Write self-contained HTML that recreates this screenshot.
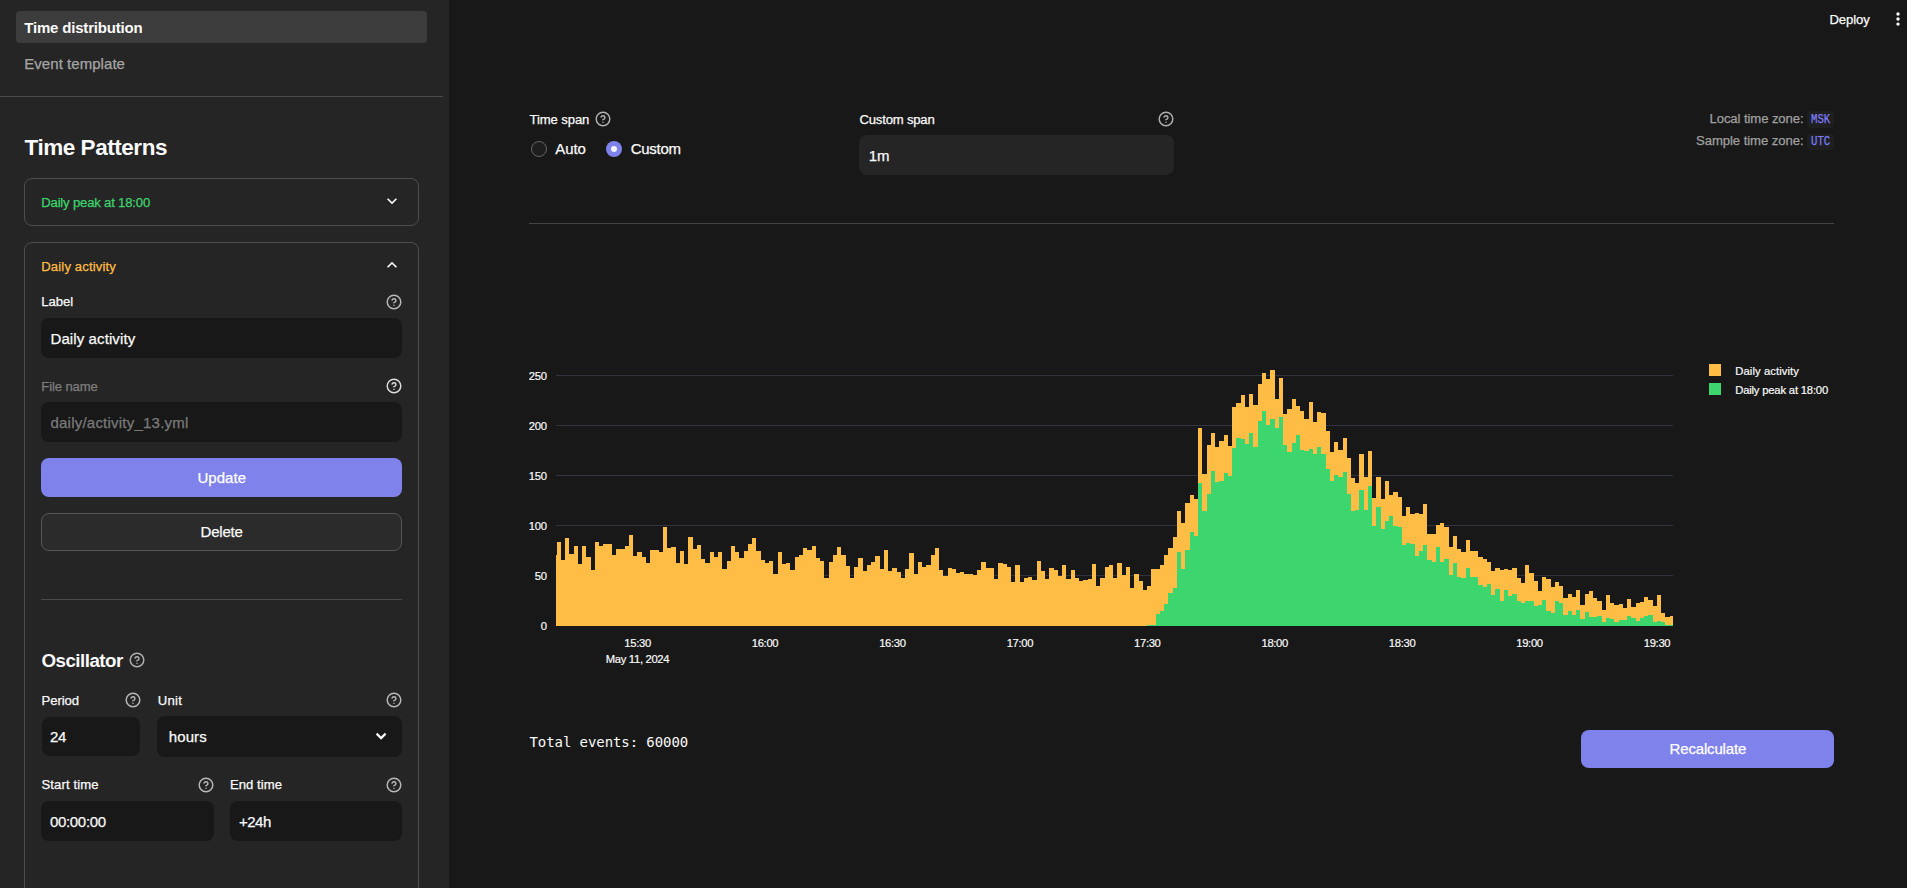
<!DOCTYPE html>
<html lang="en">
<head>
<meta charset="utf-8">
<title>Time distribution</title>
<style>
*{box-sizing:border-box;margin:0;padding:0}
html,body{width:1907px;height:888px;overflow:hidden;background:#181818;font-family:'Liberation Sans', sans-serif;color:#fafafa}
.abs,.tx,.ic,.chart{position:absolute}
.tx{white-space:nowrap;line-height:1;font-weight:400;-webkit-text-stroke:0.25px currentColor}
#sidebar{position:absolute;left:0;top:0;width:449px;height:888px;background:#252525;overflow:hidden}
#main{position:absolute;left:0;top:0;width:1907px;height:888px;pointer-events:none}
.nav-active{left:16px;top:11px;width:411px;height:32px;border-radius:4px;background:#3c3c3c}
.hr{height:1px;background:#4a4a4a}
.exp{border:1px solid #4e4e4e;border-radius:8px}
.inp{background:#181818;border-radius:8px}
.inp2{background:#252525;border-radius:8px}
.btn-p{background:#8082ec;border-radius:8px}
.btn-s{background:#2b2b2b;border:1px solid #565656;border-radius:8px}
.radio{width:16px;height:16px;border-radius:50%}
.radio.off{border:1px solid #656565;background:#1e1e1e}
.radio.on{background:#8082ec}
.radio.on::after{content:"";position:absolute;left:5px;top:5px;width:6px;height:6px;border-radius:50%;background:#f5f5ff}
  .chip{background:#1f1f1f;border-radius:4px}
.chart{left:529px;top:290px}
</style>
</head>
<body>
<div id="sidebar">
  <nav>
    <div class="abs nav-active"></div>
    <span class="tx" style="left:24.25px;top:20.00px;font-size:15.0px;color:#fafafa;letter-spacing:-0.185px;font-weight:700;-webkit-text-stroke:0;">Time distribution</span>
    <span class="tx" style="left:24.25px;top:56.00px;font-size:15.0px;color:#a5a5a5;letter-spacing:0.050px;">Event template</span>
  </nav>
  <div class="abs hr" style="left:0;top:96px;width:443px"></div>
  <h2 class="tx" style="left:24.50px;top:137.00px;font-size:22.5px;color:#fafafa;letter-spacing:-0.453px;font-weight:700;-webkit-text-stroke:0;">Time Patterns</h2>

  <section class="abs exp" style="left:24px;top:178px;width:395px;height:48px"></section>
  <span class="tx" style="left:41.25px;top:196.00px;font-size:13.125px;color:#3dd56d;letter-spacing:-0.183px;">Daily peak at 18:00</span>
  <svg class="ic" style="left:382px;top:191px" width="20" height="20" viewBox="0 0 24 24" fill="#fafafa"><path d="M16.59 8.59L12 13.17 7.41 8.59 6 10l6 6 6-6z"/></svg>

  <section class="abs exp" style="left:24px;top:242px;width:395px;height:700px"></section>
  <span class="tx" style="left:41.25px;top:260.00px;font-size:13.125px;color:#ffbd45;letter-spacing:0.136px;">Daily activity</span>
  <svg class="ic" style="left:382px;top:255.3px" width="20" height="20" viewBox="0 0 24 24" fill="#fafafa"><path d="M12 8l-6 6 1.41 1.41L12 10.83l4.59 4.59L18 14z"/></svg>

  <label class="tx" style="left:41.25px;top:295.00px;font-size:13.125px;color:#fafafa;letter-spacing:-0.065px;">Label</label>
  <svg class="ic" style="left:386.00px;top:294.00px" width="16" height="16" viewBox="0 0 24 24" fill="none" stroke="#b8b8b8" stroke-width="2.2" stroke-linecap="round" stroke-linejoin="round"><circle cx="12" cy="12" r="10.2"/><path d="M9.09 9a3 3 0 0 1 5.83 1c0 2-3 3-3 3"/><line x1="12" y1="17" x2="12.01" y2="17"/></svg>
  <div class="abs inp" style="left:41px;top:318px;width:361px;height:40px"></div>
  <span class="tx" style="left:50.50px;top:331.00px;font-size:15.0px;color:#fafafa;letter-spacing:0.100px;">Daily activity</span>

  <label class="tx" style="left:41.25px;top:380.00px;font-size:13.125px;color:#7e7e7e;letter-spacing:-0.118px;">File name</label>
  <svg class="ic" style="left:386.00px;top:378.25px" width="16" height="16" viewBox="0 0 24 24" fill="none" stroke="#dcdcdc" stroke-width="2.2" stroke-linecap="round" stroke-linejoin="round"><circle cx="12" cy="12" r="10.2"/><path d="M9.09 9a3 3 0 0 1 5.83 1c0 2-3 3-3 3"/><line x1="12" y1="17" x2="12.01" y2="17"/></svg>
  <div class="abs inp" style="left:41px;top:402px;width:361px;height:40px"></div>
  <span class="tx" style="left:50.50px;top:415.00px;font-size:15.0px;color:#7a7a7a;letter-spacing:0.220px;">daily/activity_13.yml</span>

  <div class="abs btn-p" style="left:41px;top:458px;width:361px;height:39px"></div>
  <span class="tx" style="left:197.50px;top:470.00px;font-size:15.0px;color:#ffffff;letter-spacing:0.022px;">Update</span>
  <div class="abs btn-s" style="left:41px;top:513px;width:361px;height:38px"></div>
  <span class="tx" style="left:200.50px;top:524.00px;font-size:15.0px;color:#fafafa;letter-spacing:-0.185px;">Delete</span>

  <div class="abs hr" style="left:41px;top:599px;width:361px"></div>

  <h3 class="tx" style="left:41.50px;top:652.00px;font-size:18.75px;color:#fafafa;letter-spacing:-0.524px;font-weight:700;-webkit-text-stroke:0;">Oscillator</h3>
  <svg class="ic" style="left:129.00px;top:652.25px" width="16" height="16" viewBox="0 0 24 24" fill="none" stroke="#b0b0b0" stroke-width="2.2" stroke-linecap="round" stroke-linejoin="round"><circle cx="12" cy="12" r="10.2"/><path d="M9.09 9a3 3 0 0 1 5.83 1c0 2-3 3-3 3"/><line x1="12" y1="17" x2="12.01" y2="17"/></svg>

  <label class="tx" style="left:41.50px;top:694.00px;font-size:13.125px;color:#fafafa;letter-spacing:-0.066px;">Period</label>
  <svg class="ic" style="left:125.00px;top:692.25px" width="16" height="16" viewBox="0 0 24 24" fill="none" stroke="#b8b8b8" stroke-width="2.2" stroke-linecap="round" stroke-linejoin="round"><circle cx="12" cy="12" r="10.2"/><path d="M9.09 9a3 3 0 0 1 5.83 1c0 2-3 3-3 3"/><line x1="12" y1="17" x2="12.01" y2="17"/></svg>
  <label class="tx" style="left:157.75px;top:694.00px;font-size:13.125px;color:#fafafa;letter-spacing:0.297px;">Unit</label>
  <svg class="ic" style="left:386.00px;top:692.25px" width="16" height="16" viewBox="0 0 24 24" fill="none" stroke="#b8b8b8" stroke-width="2.2" stroke-linecap="round" stroke-linejoin="round"><circle cx="12" cy="12" r="10.2"/><path d="M9.09 9a3 3 0 0 1 5.83 1c0 2-3 3-3 3"/><line x1="12" y1="17" x2="12.01" y2="17"/></svg>
  <div class="abs inp" style="left:41.5px;top:717px;width:98.5px;height:39px"></div>
  <span class="tx" style="left:50.00px;top:729.00px;font-size:15.0px;color:#fafafa;letter-spacing:-0.342px;">24</span>
  <div class="abs inp" style="left:157px;top:716px;width:245px;height:41px"></div>
  <span class="tx" style="left:168.75px;top:729.00px;font-size:15.0px;color:#fafafa;letter-spacing:0.096px;">hours</span>
  <svg class="ic" style="left:374px;top:730px" width="14" height="12" viewBox="0 0 14 12" fill="none" stroke="#fafafa" stroke-width="2.2"><path d="M2.6 3.6L7.1 8.1L11.6 3.6"/></svg>

  <label class="tx" style="left:41.50px;top:778.00px;font-size:13.125px;color:#fafafa;letter-spacing:0.116px;">Start time</label>
  <svg class="ic" style="left:198.00px;top:777.00px" width="16" height="16" viewBox="0 0 24 24" fill="none" stroke="#b8b8b8" stroke-width="2.2" stroke-linecap="round" stroke-linejoin="round"><circle cx="12" cy="12" r="10.2"/><path d="M9.09 9a3 3 0 0 1 5.83 1c0 2-3 3-3 3"/><line x1="12" y1="17" x2="12.01" y2="17"/></svg>
  <label class="tx" style="left:230.00px;top:778.00px;font-size:13.125px;color:#fafafa;letter-spacing:0.033px;">End time</label>
  <svg class="ic" style="left:386.00px;top:777.00px" width="16" height="16" viewBox="0 0 24 24" fill="none" stroke="#b8b8b8" stroke-width="2.2" stroke-linecap="round" stroke-linejoin="round"><circle cx="12" cy="12" r="10.2"/><path d="M9.09 9a3 3 0 0 1 5.83 1c0 2-3 3-3 3"/><line x1="12" y1="17" x2="12.01" y2="17"/></svg>
  <div class="abs inp" style="left:41px;top:801px;width:173px;height:40px"></div>
  <span class="tx" style="left:50.00px;top:814.00px;font-size:15.0px;color:#fafafa;letter-spacing:-0.330px;">00:00:00</span>
  <div class="abs inp" style="left:230px;top:801px;width:172px;height:40px"></div>
  <span class="tx" style="left:239.00px;top:814.00px;font-size:15.0px;color:#fafafa;letter-spacing:-0.509px;">+24h</span>
</div>

<div id="main">
  <span class="tx" style="left:1829.50px;top:13.00px;font-size:13.125px;color:#fafafa;letter-spacing:-0.093px;">Deploy</span>
  <svg class="ic" style="left:1894px;top:10px" width="8" height="20" viewBox="0 0 8 20" fill="#fafafa"><circle cx="4" cy="4" r="1.7"/><circle cx="4" cy="9.05" r="1.7"/><circle cx="4" cy="14.1" r="1.7"/></svg>

  <label class="tx" style="left:529.50px;top:113.00px;font-size:13.125px;color:#fafafa;letter-spacing:-0.107px;">Time span</label>
  <svg class="ic" style="left:595.00px;top:111.25px" width="16" height="16" viewBox="0 0 24 24" fill="none" stroke="#b0b0b0" stroke-width="2.2" stroke-linecap="round" stroke-linejoin="round"><circle cx="12" cy="12" r="10.2"/><path d="M9.09 9a3 3 0 0 1 5.83 1c0 2-3 3-3 3"/><line x1="12" y1="17" x2="12.01" y2="17"/></svg>
  <div class="abs radio off" style="left:531px;top:141px"></div>
  <span class="tx" style="left:555.25px;top:141.00px;font-size:15.0px;color:#fafafa;letter-spacing:-0.089px;">Auto</span>
  <div class="abs radio on" style="left:606px;top:141px"></div>
  <span class="tx" style="left:630.75px;top:141.00px;font-size:15.0px;color:#fafafa;letter-spacing:-0.280px;">Custom</span>

  <label class="tx" style="left:859.50px;top:113.00px;font-size:13.125px;color:#fafafa;letter-spacing:-0.203px;">Custom span</label>
  <svg class="ic" style="left:1157.50px;top:111.25px" width="16" height="16" viewBox="0 0 24 24" fill="none" stroke="#b0b0b0" stroke-width="2.2" stroke-linecap="round" stroke-linejoin="round"><circle cx="12" cy="12" r="10.2"/><path d="M9.09 9a3 3 0 0 1 5.83 1c0 2-3 3-3 3"/><line x1="12" y1="17" x2="12.01" y2="17"/></svg>
  <div class="abs inp2" style="left:859px;top:135px;width:315px;height:40px"></div>
  <span class="tx" style="left:868.75px;top:148.00px;font-size:15.0px;color:#fafafa;letter-spacing:-0.169px;">1m</span>

  <span class="tx" style="left:1709.50px;top:112.00px;font-size:13.125px;color:#a0a0a0;letter-spacing:-0.091px;">Local time zone:</span>
  <div class="abs chip" style="left:1807px;top:111px;width:27px;height:16.5px"></div>
  <code class="tx" style="left:1810.80px;top:114.00px;font-size:12.5px;color:#7d7df8;transform:scaleX(0.8532);transform-origin:0 0;font-family:'Liberation Mono', monospace;">MSK</code>
  <span class="tx" style="left:1696.00px;top:134.00px;font-size:13.125px;color:#a0a0a0;letter-spacing:-0.063px;">Sample time zone:</span>
  <div class="abs chip" style="left:1807px;top:133.5px;width:27px;height:16.5px"></div>
  <code class="tx" style="left:1810.80px;top:136.00px;font-size:12.5px;color:#7d7df8;transform:scaleX(0.8532);transform-origin:0 0;font-family:'Liberation Mono', monospace;">UTC</code>

  <div class="abs hr" style="left:529px;top:223px;width:1305px;background:#444444"></div>

<svg class="chart" width="1305" height="450" viewBox="529 290 1305 450" shape-rendering="crispEdges">
<line x1="556" x2="1673" y1="625.5" y2="625.5" stroke="#31333f" stroke-width="1"/>
<line x1="556" x2="1673" y1="575.5" y2="575.5" stroke="#31333f" stroke-width="1"/>
<line x1="556" x2="1673" y1="525.5" y2="525.5" stroke="#31333f" stroke-width="1"/>
<line x1="556" x2="1673" y1="475.5" y2="475.5" stroke="#31333f" stroke-width="1"/>
<line x1="556" x2="1673" y1="425.5" y2="425.5" stroke="#31333f" stroke-width="1"/>
<line x1="556" x2="1673" y1="375.5" y2="375.5" stroke="#31333f" stroke-width="1"/>
<path d="M556 626V555H557V626ZM557 626V542H561V626ZM561 626V560H565V626ZM565 626V538H569V626ZM569 626V554H574V626ZM574 626V546H578V626ZM578 626V564H582V626ZM582 626V546H586V626ZM586 626V557H591V626ZM591 626V570H595V626ZM595 626V542H599V626ZM599 626V546H603V626ZM603 626V544H608V626ZM608 626V544H612V626ZM612 626V555H616V626ZM616 626V549H620V626ZM620 626V549H625V626ZM625 626V546H629V626ZM629 626V535H633V626ZM633 626V556H637V626ZM637 626V552H642V626ZM642 626V557H646V626ZM646 626V563H650V626ZM650 626V550H654V626ZM654 626V550H659V626ZM659 626V552H663V626ZM663 626V527H667V626ZM667 626V548H671V626ZM671 626V547H676V626ZM676 626V563H680V626ZM680 626V551H684V626ZM684 626V564H688V626ZM688 626V537H693V626ZM693 626V549H697V626ZM697 626V545H701V626ZM701 626V559H705V626ZM705 626V563H710V626ZM710 626V552H714V626ZM714 626V557H718V626ZM718 626V552H722V626ZM722 626V569H727V626ZM727 626V561H731V626ZM731 626V546H735V626ZM735 626V552H739V626ZM739 626V558H744V626ZM744 626V551H748V626ZM748 626V544H752V626ZM752 626V538H756V626ZM756 626V551H761V626ZM761 626V560H765V626ZM765 626V563H769V626ZM769 626V561H773V626ZM773 626V574H778V626ZM778 626V552H782V626ZM782 626V564H786V626ZM786 626V563H790V626ZM790 626V570H795V626ZM795 626V557H799V626ZM799 626V555H803V626ZM803 626V548H807V626ZM807 626V550H812V626ZM812 626V546H816V626ZM816 626V558H820V626ZM820 626V561H824V626ZM824 626V578H829V626ZM829 626V562H833V626ZM833 626V555H837V626ZM837 626V547H841V626ZM841 626V555H846V626ZM846 626V566H850V626ZM850 626V578H854V626ZM854 626V567H858V626ZM858 626V558H863V626ZM863 626V571H867V626ZM867 626V565H871V626ZM871 626V562H875V626ZM875 626V556H880V626ZM880 626V569H884V626ZM884 626V550H888V626ZM888 626V571H892V626ZM892 626V568H897V626ZM897 626V572H901V626ZM901 626V578H905V626ZM905 626V569H909V626ZM909 626V553H914V626ZM914 626V574H918V626ZM918 626V562H922V626ZM922 626V567H926V626ZM926 626V565H931V626ZM931 626V555H935V626ZM935 626V548H939V626ZM939 626V570H943V626ZM943 626V576H948V626ZM948 626V568H952V626ZM952 626V569H956V626ZM956 626V573H960V626ZM960 626V572H964V626ZM964 626V574H969V626ZM969 626V574H973V626ZM973 626V575H977V626ZM977 626V570H981V626ZM981 626V562H986V626ZM986 626V568H990V626ZM990 626V568H994V626ZM994 626V579H998V626ZM998 626V563H1003V626ZM1003 626V564H1007V626ZM1007 626V567H1011V626ZM1011 626V582H1015V626ZM1015 626V565H1020V626ZM1020 626V582H1024V626ZM1024 626V578H1028V626ZM1028 626V577H1032V626ZM1032 626V580H1037V626ZM1037 626V561H1041V626ZM1041 626V571H1045V626ZM1045 626V579H1049V626ZM1049 626V568H1054V626ZM1054 626V570H1058V626ZM1058 626V576H1062V626ZM1062 626V565H1066V626ZM1066 626V579H1071V626ZM1071 626V570H1075V626ZM1075 626V578H1079V626ZM1079 626V581H1083V626ZM1083 626V580H1088V626ZM1088 626V579H1092V626ZM1092 626V564H1096V626ZM1096 626V586H1100V626ZM1100 626V578H1105V626ZM1105 626V567H1109V626ZM1109 626V565H1113V626ZM1113 626V578H1117V626ZM1117 626V563H1122V626ZM1122 626V575H1126V626ZM1126 626V567H1130V626ZM1130 626V588H1134V626ZM1134 626V574H1139V626ZM1139 626V581H1143V626ZM1143 626V590H1147V626ZM1147 626V586H1151V626ZM1151 626V569H1156V626ZM1156 626V569H1160V626ZM1160 626V565H1164V626ZM1164 626V555H1168V626ZM1168 626V548H1173V626ZM1173 626V537H1177V626ZM1177 626V511H1181V626ZM1181 626V523H1185V626ZM1185 626V503H1190V626ZM1190 626V495H1194V626ZM1194 626V499H1198V626ZM1198 626V428H1202V626ZM1202 626V474H1207V626ZM1207 626V445H1211V626ZM1211 626V433H1215V626ZM1215 626V447H1219V626ZM1219 626V441H1224V626ZM1224 626V435H1228V626ZM1228 626V446H1232V626ZM1232 626V407H1236V626ZM1236 626V403H1241V626ZM1241 626V395H1245V626ZM1245 626V407H1249V626ZM1249 626V394H1253V626ZM1253 626V405H1258V626ZM1258 626V384H1262V626ZM1262 626V373H1266V626ZM1266 626V379H1270V626ZM1270 626V370H1275V626ZM1275 626V399H1279V626ZM1279 626V378H1283V626ZM1283 626V414H1287V626ZM1287 626V409H1292V626ZM1292 626V399H1296V626ZM1296 626V406H1300V626ZM1300 626V411H1304V626ZM1304 626V419H1309V626ZM1309 626V402H1313V626ZM1313 626V422H1317V626ZM1317 626V412H1321V626ZM1321 626V413H1326V626ZM1326 626V431H1330V626ZM1330 626V452H1334V626ZM1334 626V442H1338V626ZM1338 626V450H1343V626ZM1343 626V438H1347V626ZM1347 626V458H1351V626ZM1351 626V478H1355V626ZM1355 626V483H1359V626ZM1359 626V454H1364V626ZM1364 626V477H1368V626ZM1368 626V451H1372V626ZM1372 626V498H1376V626ZM1376 626V477H1381V626ZM1381 626V499H1385V626ZM1385 626V481H1389V626ZM1389 626V495H1393V626ZM1393 626V492H1398V626ZM1398 626V497H1402V626ZM1402 626V516H1406V626ZM1406 626V507H1410V626ZM1410 626V514H1415V626ZM1415 626V513H1419V626ZM1419 626V514H1423V626ZM1423 626V504H1427V626ZM1427 626V534H1432V626ZM1432 626V534H1436V626ZM1436 626V525H1440V626ZM1440 626V523H1444V626ZM1444 626V527H1449V626ZM1449 626V547H1453V626ZM1453 626V536H1457V626ZM1457 626V549H1461V626ZM1461 626V552H1466V626ZM1466 626V540H1470V626ZM1470 626V551H1474V626ZM1474 626V551H1478V626ZM1478 626V557H1483V626ZM1483 626V559H1487V626ZM1487 626V562H1491V626ZM1491 626V571H1495V626ZM1495 626V568H1500V626ZM1500 626V570H1504V626ZM1504 626V569H1508V626ZM1508 626V570H1512V626ZM1512 626V568H1517V626ZM1517 626V578H1521V626ZM1521 626V583H1525V626ZM1525 626V565H1529V626ZM1529 626V573H1534V626ZM1534 626V581H1538V626ZM1538 626V591H1542V626ZM1542 626V577H1546V626ZM1546 626V579H1551V626ZM1551 626V587H1555V626ZM1555 626V582H1559V626ZM1559 626V586H1563V626ZM1563 626V598H1568V626ZM1568 626V594H1572V626ZM1572 626V597H1576V626ZM1576 626V590H1580V626ZM1580 626V605H1585V626ZM1585 626V594H1589V626ZM1589 626V591H1593V626ZM1593 626V598H1597V626ZM1597 626V601H1602V626ZM1602 626V610H1606V626ZM1606 626V595H1610V626ZM1610 626V603H1614V626ZM1614 626V605H1619V626ZM1619 626V604H1623V626ZM1623 626V608H1627V626ZM1627 626V599H1631V626ZM1631 626V607H1636V626ZM1636 626V603H1640V626ZM1640 626V602H1644V626ZM1644 626V597H1648V626ZM1648 626V600H1653V626ZM1653 626V606H1657V626ZM1657 626V595H1661V626ZM1661 626V613H1665V626ZM1665 626V617H1670V626ZM1670 626V616H1673V626Z" fill="#ffbd45"/>
<path d="M1147 626V625H1151V626ZM1151 626V625H1156V626ZM1156 626V614H1160V626ZM1160 626V611H1164V626ZM1164 626V604H1168V626ZM1168 626V593H1173V626ZM1173 626V588H1177V626ZM1177 626V552H1181V626ZM1181 626V569H1185V626ZM1185 626V550H1190V626ZM1190 626V532H1194V626ZM1194 626V536H1198V626ZM1198 626V483H1202V626ZM1202 626V511H1207V626ZM1207 626V494H1211V626ZM1211 626V471H1215V626ZM1215 626V482H1219V626ZM1219 626V481H1224V626ZM1224 626V473H1228V626ZM1228 626V476H1232V626ZM1232 626V448H1236V626ZM1236 626V438H1241V626ZM1241 626V439H1245V626ZM1245 626V444H1249V626ZM1249 626V433H1253V626ZM1253 626V447H1258V626ZM1258 626V421H1262V626ZM1262 626V411H1266V626ZM1266 626V425H1270V626ZM1270 626V419H1275V626ZM1275 626V428H1279V626ZM1279 626V417H1283V626ZM1283 626V445H1287V626ZM1287 626V452H1292V626ZM1292 626V443H1296V626ZM1296 626V435H1300V626ZM1300 626V450H1304V626ZM1304 626V451H1309V626ZM1309 626V449H1313V626ZM1313 626V454H1317V626ZM1317 626V447H1321V626ZM1321 626V454H1326V626ZM1326 626V469H1330V626ZM1330 626V481H1334V626ZM1334 626V475H1338V626ZM1338 626V477H1343V626ZM1343 626V472H1347V626ZM1347 626V494H1351V626ZM1351 626V511H1355V626ZM1355 626V510H1359V626ZM1359 626V490H1364V626ZM1364 626V510H1368V626ZM1368 626V486H1372V626ZM1372 626V526H1376V626ZM1376 626V507H1381V626ZM1381 626V529H1385V626ZM1385 626V521H1389V626ZM1389 626V516H1393V626ZM1393 626V526H1398V626ZM1398 626V527H1402V626ZM1402 626V545H1406V626ZM1406 626V543H1410V626ZM1410 626V544H1415V626ZM1415 626V556H1419V626ZM1419 626V551H1423V626ZM1423 626V545H1427V626ZM1427 626V560H1432V626ZM1432 626V562H1436V626ZM1436 626V547H1440V626ZM1440 626V562H1444V626ZM1444 626V559H1449V626ZM1449 626V575H1453V626ZM1453 626V563H1457V626ZM1457 626V577H1461V626ZM1461 626V578H1466V626ZM1466 626V568H1470V626ZM1470 626V577H1474V626ZM1474 626V577H1478V626ZM1478 626V585H1483V626ZM1483 626V587H1487V626ZM1487 626V584H1491V626ZM1491 626V595H1495V626ZM1495 626V589H1500V626ZM1500 626V601H1504V626ZM1504 626V590H1508V626ZM1508 626V596H1512V626ZM1512 626V594H1517V626ZM1517 626V601H1521V626ZM1521 626V603H1525V626ZM1525 626V601H1529V626ZM1529 626V601H1534V626ZM1534 626V606H1538V626ZM1538 626V605H1542V626ZM1542 626V600H1546V626ZM1546 626V611H1551V626ZM1551 626V613H1555V626ZM1555 626V601H1559V626ZM1559 626V603H1563V626ZM1563 626V615H1568V626ZM1568 626V611H1572V626ZM1572 626V615H1576V626ZM1576 626V610H1580V626ZM1580 626V619H1585V626ZM1585 626V612H1589V626ZM1589 626V617H1593V626ZM1593 626V617H1597V626ZM1597 626V616H1602V626ZM1602 626V622H1606V626ZM1606 626V618H1610V626ZM1610 626V619H1614V626ZM1614 626V622H1619V626ZM1619 626V620H1623V626ZM1623 626V620H1627V626ZM1627 626V616H1631V626ZM1631 626V618H1636V626ZM1636 626V621H1640V626ZM1640 626V618H1644V626ZM1644 626V616H1648V626ZM1648 626V615H1653V626ZM1653 626V622H1657V626ZM1657 626V621H1661V626ZM1661 626V622H1665V626ZM1665 626V625H1670V626ZM1670 626V625H1673V626Z" fill="#3dd56d"/>
<g shape-rendering="auto" font-family="'Liberation Sans', sans-serif" font-size="11.25" fill="#fafafa" stroke="#fafafa" stroke-width="0.2">
<text x="546.75" y="630.0" text-anchor="end" letter-spacing="-0.25">0</text>
<text x="546.75" y="580.0" text-anchor="end" letter-spacing="-0.25">50</text>
<text x="546.75" y="530.0" text-anchor="end" letter-spacing="-0.25">100</text>
<text x="546.75" y="480.0" text-anchor="end" letter-spacing="-0.25">150</text>
<text x="546.75" y="430.0" text-anchor="end" letter-spacing="-0.25">200</text>
<text x="546.75" y="380.0" text-anchor="end" letter-spacing="-0.25">250</text>
<text x="637.6" y="647" text-anchor="middle" letter-spacing="-0.34">15:30</text>
<text x="765.0" y="647" text-anchor="middle" letter-spacing="-0.34">16:00</text>
<text x="892.4" y="647" text-anchor="middle" letter-spacing="-0.34">16:30</text>
<text x="1019.9" y="647" text-anchor="middle" letter-spacing="-0.34">17:00</text>
<text x="1147.3" y="647" text-anchor="middle" letter-spacing="-0.34">17:30</text>
<text x="1274.7" y="647" text-anchor="middle" letter-spacing="-0.34">18:00</text>
<text x="1402.1" y="647" text-anchor="middle" letter-spacing="-0.34">18:30</text>
<text x="1529.5" y="647" text-anchor="middle" letter-spacing="-0.34">19:00</text>
<text x="1657.0" y="647" text-anchor="middle" letter-spacing="-0.34">19:30</text>
<text x="637.5" y="663" text-anchor="middle" letter-spacing="-0.32">May 11, 2024</text>
<text x="1735.25" y="375" letter-spacing="0.09">Daily activity</text>
<text x="1735.25" y="394" letter-spacing="-0.19">Daily peak at 18:00</text>
</g>
<rect x="1709" y="364" width="12" height="12" fill="#ffbd45"/>
<rect x="1709" y="383" width="12" height="12" fill="#3dd56d"/>
</svg>

  <pre class="tx" style="left:529.50px;top:735.00px;font-size:14px;color:#fafafa;letter-spacing:-0.081px;font-family:'DejaVu Sans Mono', 'Liberation Mono', monospace;-webkit-text-stroke:0;">Total events: 60000</pre>
  <div class="abs btn-p" style="left:1581px;top:730px;width:253px;height:38px"></div>
  <span class="tx" style="left:1669.60px;top:741.00px;font-size:15.0px;color:#ffffff;letter-spacing:-0.171px;">Recalculate</span>
</div>
</body>
</html>
